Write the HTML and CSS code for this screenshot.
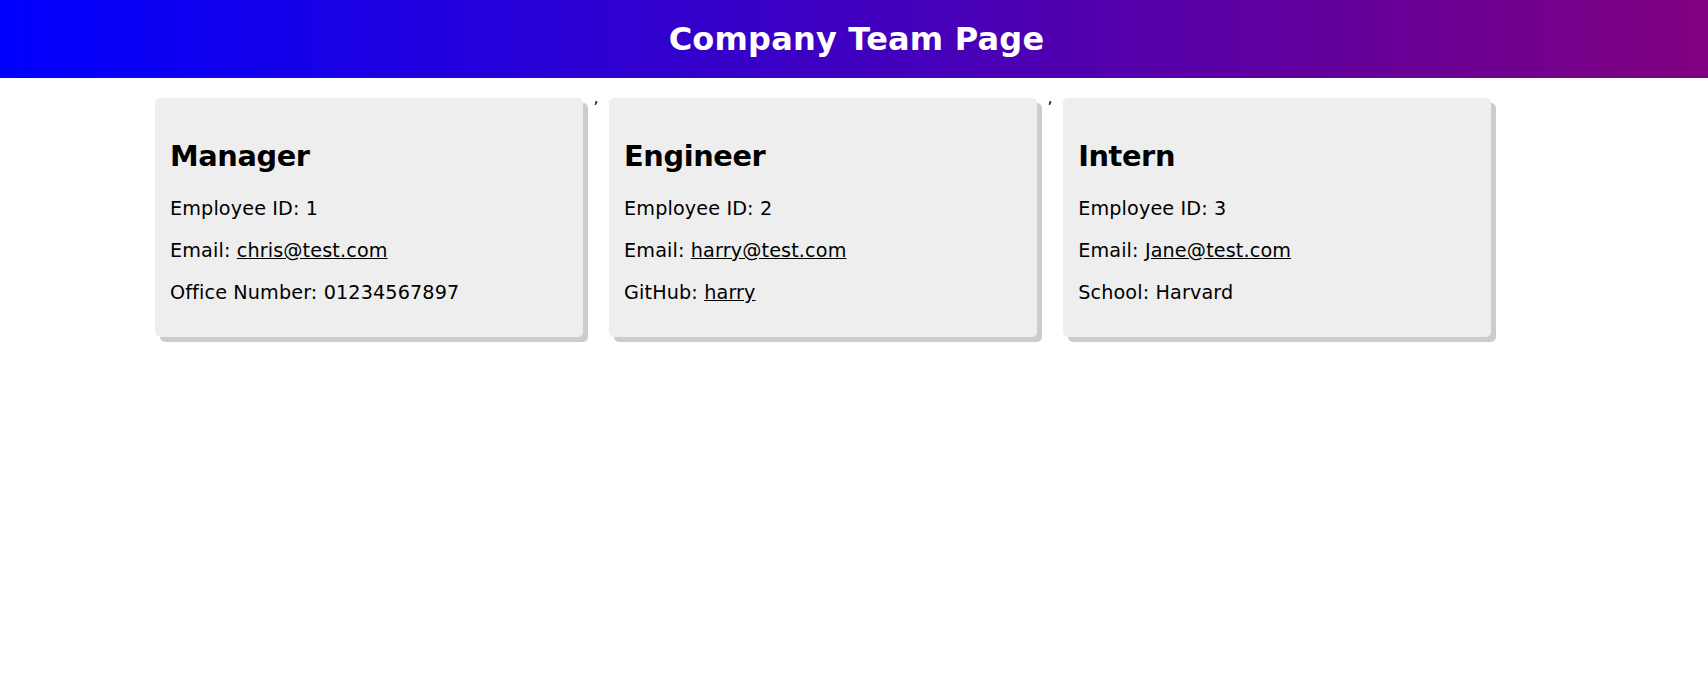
FILE: index.html
```html
<!DOCTYPE html>
<html lang="en">
<head>
<meta charset="utf-8">
<title>Company Team Page</title>
<link rel="stylesheet" href="styles.css">
</head>
<body>
<header class="banner">
  <h1 class="banner-title">Company Team Page</h1>
</header>
<main class="team">
  <div class="card">
    <h2 class="card-title">Manager</h2>
    <p class="card-line">Employee ID: 1</p>
    <p class="card-line">Email: <a class="card-link" href="mailto:chris@test.com">chris@test.com</a></p>
    <p class="card-line">Office Number: 01234567897</p>
  </div>,<div class="card">
    <h2 class="card-title">Engineer</h2>
    <p class="card-line">Employee ID: 2</p>
    <p class="card-line">Email: <a class="card-link" href="mailto:harry@test.com">harry@test.com</a></p>
    <p class="card-line">GitHub: <a class="card-link" href="#">harry</a></p>
  </div>,<div class="card">
    <h2 class="card-title">Intern</h2>
    <p class="card-line">Employee ID: 3</p>
    <p class="card-line">Email: <a class="card-link" href="mailto:Jane@test.com">Jane@test.com</a></p>
    <p class="card-line">School: Harvard</p>
  </div>
</main>
</body>
</html>
```
FILE: styles.css
```css
html, body {
  margin: 0;
  padding: 0;
  background: #ffffff;
}

body {
  font-family: "DejaVu Sans", Verdana, sans-serif;
  font-size: 16px;
  color: #000000;
}

.banner {
  background: linear-gradient(to right, #0000ff, #800080);
  padding: 20px 0;
  text-align: center;
}

.banner-title {
  margin: 0;
  padding-left: 5px;
  font-size: 32px;
  font-weight: bold;
  letter-spacing: 0.2px;
  color: #ffffff;
}

.team {
  display: flex;
  align-items: stretch;
  margin-top: 10px;
  padding-left: 144.5px;
}

.card {
  width: 428px;
  box-sizing: border-box;
  margin: 10px 10.5px;
  padding: 17px 15px 14px;
  background: #eeeeee;
  border-radius: 5px;
  box-shadow: 5px 5px 0 #cccccc;
  font-size: 19.2px;
  letter-spacing: 0.13px;
}

.card-title {
  font-size: 28.8px;
  font-weight: bold;
  letter-spacing: -0.4px;
  margin: 0.83em 0;
}

.card-line {
  margin: 1em 0;
}

.card-link {
  color: #000000;
  text-decoration: underline;
}
```
